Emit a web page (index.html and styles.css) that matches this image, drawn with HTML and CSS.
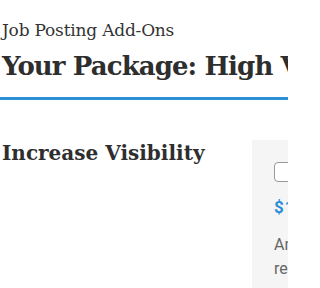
FILE: index.html
```html
<!DOCTYPE html>
<html>
<head>
<meta charset="utf-8">
<link rel="stylesheet" href="styles.css">
</head>
<body>
<div class="frame">
<div class="page">
  <header class="head">
    <div class="sub">Job Posting Add-Ons</div>
    <h1 class="title">Your Package: High Visibility</h1>
  </header>
  <section class="row">
    <h2 class="sec-title">Increase Visibility</h2>
    <div class="card">
      <div class="check"></div>
      <div class="price">$149</div>
      <p class="desc">An eye-catching highlight<br>reaches more candidates.</p>
    </div>
  </section>
</div>
</div>
</body>
</html>
```
FILE: styles.css
```css
html, body {
  margin: 0;
  padding: 0;
  background: #fff;
}
.frame {
  width: 288px;
  height: 288px;
  overflow: hidden;
}
.page {
  width: 560px;
}
.head {
  padding: 18px 0 0 2px;
  height: 79px;
  border-bottom: 3px solid #2d8fd6;
}
.sub {
  font-family: "DejaVu Serif", serif;
  font-weight: 300;
  font-size: 17px;
  line-height: 24px;
  color: #333;
  letter-spacing: -0.2px;
}
.title {
  margin: 6px 0 0;
  font-family: "DejaVu Serif", serif;
  font-weight: 700;
  font-size: 26px;
  line-height: 36px;
  color: #2e2e2e;
  letter-spacing: -0.9px;
  white-space: nowrap;
}
.row {
  display: flex;
  padding-top: 40px;
}
.sec-title {
  margin: 0;
  width: 252px;
  flex: none;
  padding: 0 0 0 2px;
  box-sizing: border-box;
  font-family: "DejaVu Serif", serif;
  font-weight: 700;
  font-size: 20px;
  line-height: 26px;
  color: #2e2e2e;
}
.card {
  width: 300px;
  height: 160px;
  flex: none;
  background: #f5f5f5;
  padding: 22px 0 0 22px;
  box-sizing: border-box;
}
.check {
  width: 30px;
  height: 20px;
  border: 1px solid #9a9a9a;
  border-radius: 4px;
  background: #fff;
  box-sizing: border-box;
}
.price {
  margin-top: 15px;
  font-family: Roboto, "Liberation Sans", sans-serif;
  font-weight: 700;
  font-size: 17px;
  line-height: 20px;
  color: #2d8fd6;
  letter-spacing: 1px;
}
.desc {
  margin: 16px 0 0;
  font-family: Roboto, "Liberation Sans", sans-serif;
  font-size: 16px;
  line-height: 24px;
  color: #666;
  white-space: nowrap;
}
```
